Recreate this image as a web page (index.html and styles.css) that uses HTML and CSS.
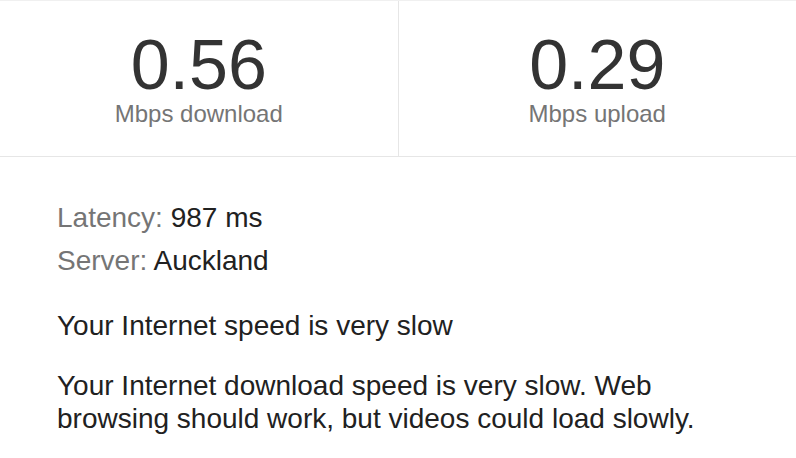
FILE: index.html
```html
<!DOCTYPE html>
<html>
<head>
<meta charset="utf-8">
<link rel="stylesheet" href="styles.css">
</head>
<body>
<div class="stats">
  <div class="stat">
    <div class="num">0.56</div>
    <div class="unit">Mbps download</div>
  </div>
  <div class="stat">
    <div class="num">0.29</div>
    <div class="unit">Mbps upload</div>
  </div>
</div>
<div class="details">
  <div class="row"><span class="key">Latency:</span> 987 ms</div>
  <div class="row second"><span class="key">Server:</span> Auckland</div>
  <p class="verdict">Your Internet speed is very slow</p>
  <p class="desc">Your Internet download speed is very slow. Web browsing should work, but videos could load slowly.</p>
</div>
</body>
</html>
```
FILE: styles.css
```css
html, body {
  margin: 0;
  padding: 0;
  background: #ffffff;
  font-family: "Liberation Sans", Arial, sans-serif;
}
.stats {
  display: flex;
  border-top: 1px solid #f0f0f0;
  border-bottom: 1px solid #e6e6e6;
  height: 155px;
}
.stat {
  flex: 1;
  display: flex;
  flex-direction: column;
  align-items: center;
  padding-top: 30px;
}
.stat:first-child {
  border-right: 1px solid #e6e6e6;
}
.num {
  font-size: 70px;
  line-height: 68px;
  color: #333333;
}
.unit {
  margin-top: 1px;
  font-size: 24px;
  line-height: 28px;
  color: #757575;
}
.details {
  padding: 44px 56px 0 57px;
  font-size: 28px;
  line-height: 33px;
  color: #212121;
}
.row { margin: 0; }
.second { margin-top: 10px; }
.key { color: #757575; }
.verdict { margin: 32px 0 0 0; }
.desc { margin: 27px 0 0 0; }
```
